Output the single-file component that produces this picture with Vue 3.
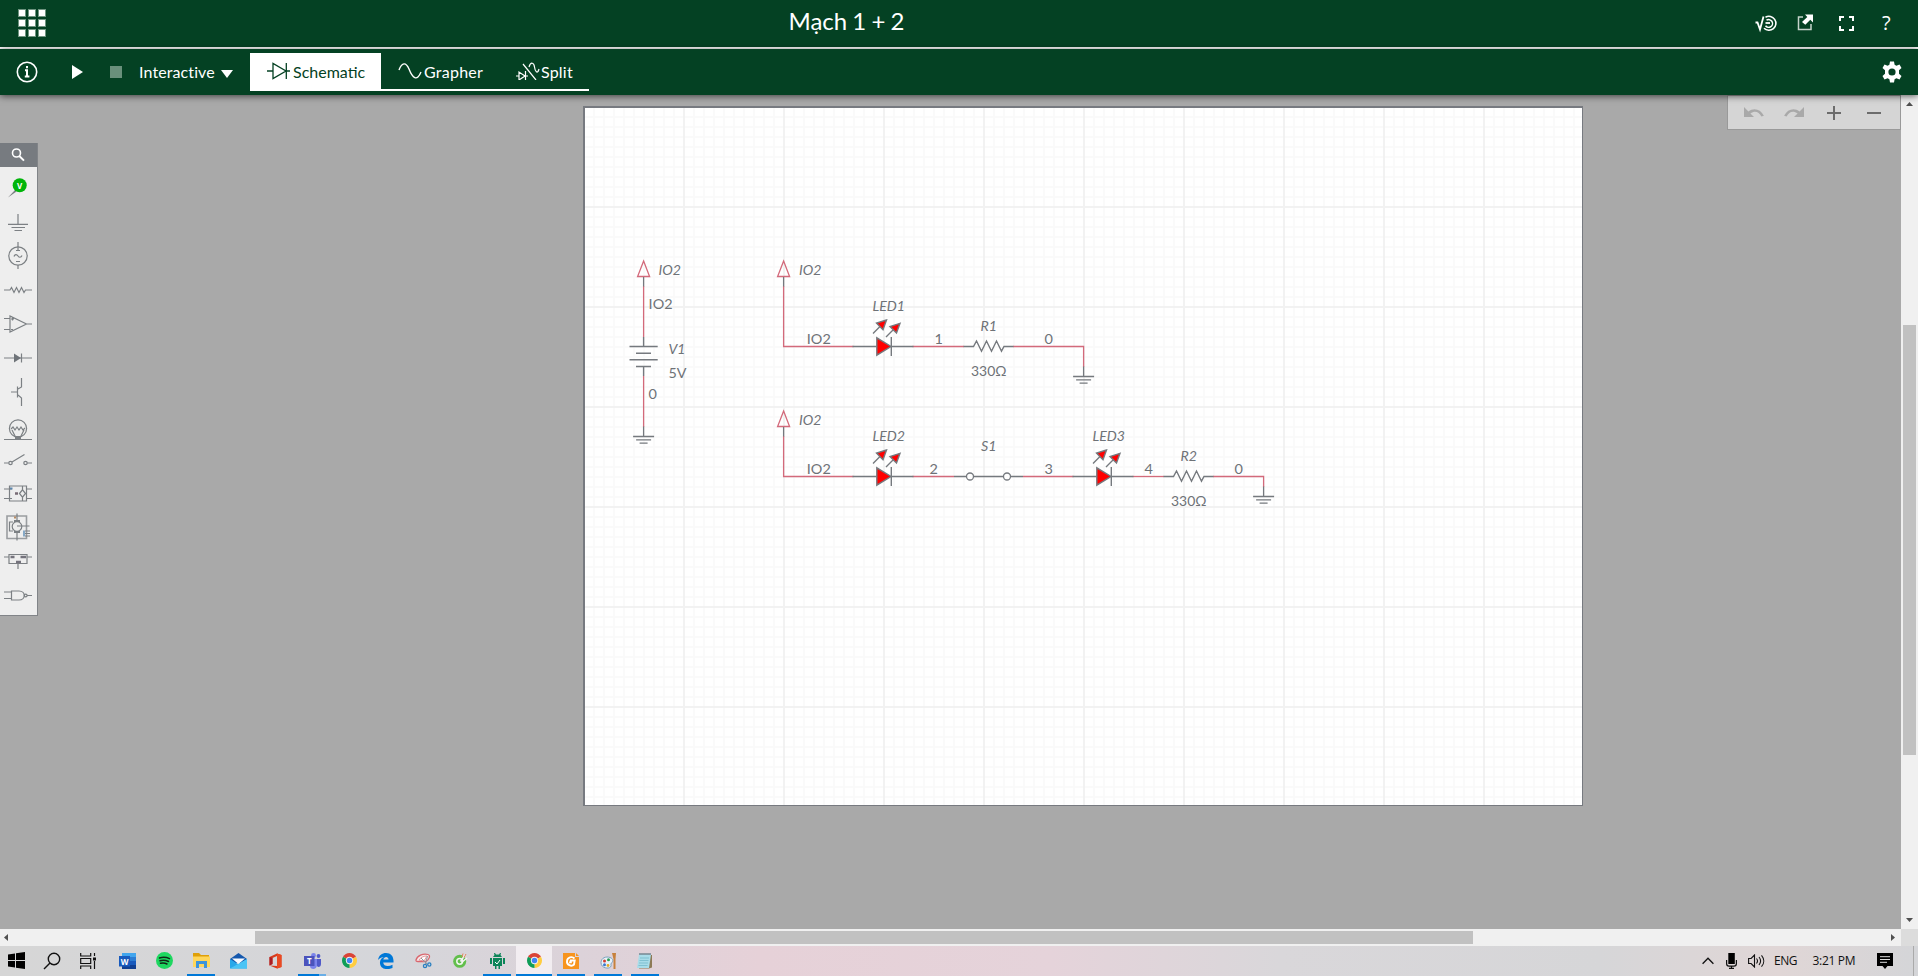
<script setup>
const leds = [
  { name: 'LED1', x: 883.5, y: 346.5 },
  { name: 'LED2', x: 883.5, y: 476.5 },
  { name: 'LED3', x: 1103.5, y: 476.5 },
]
const resistors = [
  { name: 'R1', x: 988.5, y: 346.5 },
  { name: 'R2', x: 1188.5, y: 476.5 },
]
const connectors = [
  { x: 643.6, y: 260.5 },
  { x: 783.6, y: 260.5 },
  { x: 783.6, y: 410.5 },
]
const grounds = [
  { x: 643.6, y: 436.5 },
  { x: 1083.6, y: 376.5 },
  { x: 1263.6, y: 496.5 },
]
const wires = [
  'M643.6 286V337',
  'M643.6 376V427',
  'M783.6 286V346.5H853.5',
  'M912.5 346.5H964',
  'M1013 346.5H1083.6V367',
  'M783.6 436V476.5H853.5',
  'M912.5 476.5H954',
  'M1023 476.5H1073.5',
  'M1132.5 476.5H1164',
  'M1213 476.5H1263.6V487',
]
const labels = [
  { t: 'IO2', x: 658.5, y: 275, w: 22.5, i: true },
  { t: 'IO2', x: 648.6, y: 309, w: 24 },
  { t: 'V1', x: 668.5, y: 354, w: 17, i: true },
  { t: '5V', x: 668.5, y: 378, w: 18 },
  { t: '0', x: 648.5, y: 399, w: 8.4 },
  { t: 'IO2', x: 799, y: 275, w: 22.5, i: true },
  { t: 'IO2', x: 799, y: 425, w: 22.5, i: true },
  { t: 'IO2', x: 806.8, y: 344, w: 24 },
  { t: 'IO2', x: 806.8, y: 474, w: 24 },
  { t: 'LED1', x: 872.5, y: 311, w: 32.5, i: true },
  { t: 'LED2', x: 872.5, y: 441, w: 32.5, i: true },
  { t: 'LED3', x: 1092.5, y: 441, w: 32.5, i: true },
  { t: '1', x: 934.5, y: 344, w: 8.4 },
  { t: '2', x: 929.5, y: 474, w: 8.4 },
  { t: '3', x: 1044.5, y: 474, w: 8.4 },
  { t: '4', x: 1144.5, y: 474, w: 8.4 },
  { t: '0', x: 1044.5, y: 344, w: 8.4 },
  { t: '0', x: 1234.5, y: 474, w: 8.4 },
  { t: 'R1', x: 980.5, y: 331, w: 16.5, i: true },
  { t: 'R2', x: 1180.5, y: 461, w: 16.5, i: true },
  { t: 'S1', x: 981, y: 451, w: 15.5, i: true },
  { t: '330Ω', x: 971, y: 376, w: 35.5 },
  { t: '330Ω', x: 1171, y: 506, w: 35.5 },
]
</script>

<template>
  <div class="screen">
    <header class="titlebar">
      <div class="apps"><i v-for="n in 9" :key="n"></i></div>
      <h1>Mạch 1 + 2</h1>
      <div class="actions">
        <svg class="a-sim" width="24" height="18" viewBox="0 0 24 18" fill="none" stroke="#fff">
          <path d="M.5 7.500h2L5 14.500 8.500 1.500" stroke-width="1.800" />
          <path d="M10.500 2.200A7 7 0 1 1 9 13.300" stroke-width="1.600" />
          <path d="M11.500 5.200A3.900 3.900 0 1 1 10.500 10.800" stroke-width="1.500" />
          <path d="M10.500 8h4.500" stroke-width="1.800" />
        </svg>
        <svg class="a-share" width="17" height="17" viewBox="0 0 17 17">
          <path d="M6 3H1.500v12.500H14V10" fill="none" stroke="#c5d3cb" stroke-width="1.500" />
          <path d="M8 .5h8v8l-2.700-2.700-5 5L5 8l5.300-5z" fill="#fff" />
        </svg>
        <svg class="a-full" width="15" height="15" viewBox="0 0 15 15" fill="none" stroke="#fff" stroke-width="2">
          <path d="M1 5V1h4M10 1h4v4M14 10v4h-4M5 14H1v-4" />
        </svg>
        <span class="a-help">?</span>
      </div>
    </header>

    <nav class="toolbar">
      <svg class="info" width="22" height="22" viewBox="0 0 22 22">
        <circle cx="11" cy="11" r="9.700" fill="none" stroke="#fff" stroke-width="1.600" />
        <path d="M11 5v2.200M9 9.200h2v6.300M8.800 15.500h4.600" fill="none" stroke="#fff" stroke-width="2" />
      </svg>
      <svg class="play" width="11" height="14" viewBox="0 0 11 14"><path d="M0 0L11 7 0 14z" fill="#fff" /></svg>
      <i class="stop"></i>
      <span class="mode">Interactive</span>
      <svg class="caret" width="12" height="8" viewBox="0 0 12 8"><path d="M0 0H12L6 8z" fill="#fff" /></svg>
      <div class="tabs">
        <div class="tab active">
          <svg width="24" height="18" viewBox="0 0 24 18" fill="none" stroke="#044123" stroke-width="1.300">
            <path d="M0 9H6M6 1.500V16.500L19 9zM19 9h4M19.300 1V17" />
          </svg>
          <span class="t1">Schematic</span>
        </div>
        <div class="tab grapher">
          <svg width="24" height="18" viewBox="0 0 24 18" fill="none" stroke="#fff" stroke-width="1.400">
            <path d="M1 8C4 0 8 0 11 7c3.500 9 8 13 12 3" />
          </svg>
          <span class="t2">Grapher</span>
        </div>
        <div class="tab split">
          <svg width="24" height="18" viewBox="0 0 24 18" fill="none" stroke="#fff" stroke-width="1.200">
            <path d="M0 14h3M3 10v8l6-4zM9 14h3M9.500 9v9M7 2l13 16M13 5c2-6 5-4 5.500 0s3 8 4.500 2" />
          </svg>
          <span class="t3">Split</span>
        </div>
      </div>
      <svg class="gear" width="20" height="22" viewBox="0 0 20 22">
        <path fill="#fff" fill-rule="evenodd" d="M8 0.500h4l.6 3.200 1.800 1.100 3.100-1.200 2 3.500-2.500 2.100v3.600l2.500 2.100-2 3.500-3.100-1.200-1.800 1.100-.6 3.200H8l-.6-3.200-1.800-1.100-3.100 1.200-2-3.500L3 12.800V9.200L.5 7.100l2-3.500 3.100 1.200 1.800-1.100zM10 7.400a3.600 3.600 0 1 0 0 7.200 3.600 3.600 0 0 0 0-7.200z" />
      </svg>
    </nav>

    <main class="work">
      <section class="area">
        <aside class="palette">
          <div class="search">
            <svg width="14" height="14" viewBox="0 0 14 14" fill="none" stroke="#fff">
              <circle cx="5.500" cy="5" r="4" stroke-width="1.600" /><path d="M8.300 8L13 12.700" stroke-width="1.900" />
            </svg>
          </div>
          <svg class="parts" width="37" height="448" viewBox="0 167 37 448" fill="none" stroke="#7c8084" stroke-width="1.200">
            <path d="M8 197.500L15 190l1.500 1.500z" fill="#7c8084" stroke="none" />
            <circle cx="19.700" cy="185.300" r="7" fill="#00b50a" stroke="none" />
            <text x="19.700" y="188.600" text-anchor="middle" class="probe">V</text>
            <path d="M18 214v10M8 224.300H28M11.500 227.500H25M14.500 230.500H22" />
            <circle cx="18" cy="256" r="9.200" />
            <path d="M18 242v9M18 265v4M16 250.500h4M16 261.500h4M14 256.500c1-3 3-2 4-.500s3 2 4-.500" />
            <path d="M4 290h6l1.500-2.500 2.500 5 2.500-5 2.500 5 2.500-5 2.500 5 1.500-2.500H32" />
            <path d="M10 316v16l16.500-8zM26 324h6M4 318.500h6M4 329.500h6M11 319h3M12.500 317.500v3M11 329.500h2" />
            <path d="M4 358H32M21.500 353.500v9" /><path d="M14 353.500v9l7-4.500z" fill="#6f7479" stroke="none" />
            <path d="M21.500 378v9L18 389M11 392h6.500M17.500 386.500v11M18 395l3.500 3v8" />
            <circle cx="18" cy="428.500" r="8.600" />
            <path d="M11 429l2-2 2 3 2-3 2 3 2-3 2 3 2-2M12 430l3.500 7M24 430l-3.500 7M4 439.500H32" /><path d="M15 436h6v3h-6z" fill="#7c8084" stroke="none" />
            <circle cx="10.500" cy="463" r="1.700" /><circle cx="25.500" cy="463" r="1.700" /><path d="M4 463h4.700M12 462L24.500 454.500M27.200 463H32" />
            <path d="M9.500 486h17v15h-17zM4 489h8M4 498.500h8M26.500 489H32M26.500 498.500H32M22.500 486.500v3M22.500 497.500v4M19.500 493.500l3-3.700 3 3.700-3 3.700z" />
            <path d="M15 493.500h3" stroke="#786b75" stroke-width="2.500" /><path d="M10 488.500h2.500" stroke="#5c86ad" stroke-width="2" />
            <path d="M7 516h19.500v22.500H7z" stroke="#9a9da0" stroke-width="1.600" /><circle cx="17" cy="526.500" r="4.800" />
            <path d="M17 513.500v8M17 531.500v9M13 522H9.500v9H13M17 526H29.500M25 531h5M25 533.500h5M25 536h5" />
            <path d="M14 521h6M14 532h6" stroke-width="2" /><path d="M14 517.500h2" stroke="#b88b62" stroke-width="2" /><path d="M24 530.500v6" stroke="#6290b8" stroke-width="1.500" />
            <path d="M9 554.500H27v9H9zM4 557h5M27 557h5M18 564v5" />
            <path d="M10.500 557h4M20.500 557h5.500M16 562h5" stroke="#74727c" stroke-width="2.500" />
            <path d="M11.500 591H19c7 0 7 9 0 9h-7.500zM4 592h7.500M4 598.500h7.500M27 595.500H32" /><circle cx="25.700" cy="595.500" r="1.400" />
          </svg>
        </aside>

        <div class="sheet">
          <svg width="997" height="697" viewBox="585 108 997 697" fill="none">
            <defs>
              <pattern id="minor" x="583" y="106" width="10" height="10" patternUnits="userSpaceOnUse">
                <path d="M0 1H10M1 0V10" stroke="#fafafa" stroke-width="2" />
              </pattern>
              <pattern id="major" x="583" y="106" width="100" height="100" patternUnits="userSpaceOnUse">
                <path d="M0 1H100M1 0V100" stroke="#f2f2f2" stroke-width="2" />
              </pattern>
            </defs>
            <rect x="585" y="108" width="997" height="697" fill="url(#minor)" />
            <rect x="585" y="108" width="997" height="697" fill="url(#major)" />

            <path v-for="w in wires" :key="w" :d="w" stroke="#d36a7b" stroke-width="1.300" />

            <g v-for="(c, k) in connectors" :key="'c' + k" :transform="`translate(${c.x} ${c.y})`">
              <path d="M0 .5L6 16H-6z" stroke="#d36a7b" stroke-width="1.300" />
              <path d="M0 16.500V26" stroke="#75797e" stroke-width="1.300" />
            </g>

            <g v-for="(g, k) in grounds" :key="'g' + k" :transform="`translate(${g.x} ${g.y})`" stroke="#75797e" stroke-width="1.300">
              <path d="M0-10V0M-10.500 0H10.500M-7.500 3.300H7.500M-4 6.700H4" />
            </g>

            <path
              d="M643.6 337V346.500M629.500 346.500H657.700M636 353.300H651M629.500 359.700H657.700M636 366.500H651M643.600 366.500V376"
              stroke="#75797e"
              stroke-width="1.400"
            />

            <g v-for="l in leds" :key="l.name" :transform="`translate(${l.x} ${l.y})`" stroke="#75797e" stroke-width="1.400">
              <path d="M-31 0H-7M8 0H30M7.800-9.500V9.500" />
              <path d="M-6.700-8.700V8.700L7.500 0z" fill="#f00" />
              <path d="M-10.500-13L-3-20.500M2.500-9.500L10-17" />
              <path d="M3-26.500L-7-23.500-.5-16.800zM16.500-23.200L6.500-20 13-13.500z" fill="#f00" />
            </g>

            <path
              v-for="r in resistors"
              :key="r.name"
              :transform="`translate(${r.x} ${r.y})`"
              d="M-25 0H-15L-12-5.500-7 4.700-2-5.500 3 4.700 8-5.500 13 4.700 15.500 0H25"
              stroke="#75797e"
              stroke-width="1.400"
            />

            <g stroke="#75797e" stroke-width="1.300">
              <path d="M954 476.500H966.500M973.500 476.500H1003.500M1010.500 476.500H1023" />
              <circle cx="970" cy="476.500" r="3.500" fill="#fff" /><circle cx="1007" cy="476.500" r="3.500" fill="#fff" />
            </g>

            <text
              v-for="(l, k) in labels"
              :key="'l' + k"
              :x="l.x"
              :y="l.y"
              :textLength="l.w"
              lengthAdjust="spacingAndGlyphs"
              :class="['lbl', { it: l.i }]"
            >{{ l.t }}</text>
          </svg>
        </div>

        <div class="zoombar">
          <svg width="173" height="33" viewBox="0 0 173 33" fill="none">
            <path d="M16 11v10h10l-3.600-3.600c4.500-3 8.500-1.800 11 3.100l2.500-.7c-3.400-6.700-10-8.200-15.500-4.400z" fill="#a9a9a9" />
            <path d="M76 11v10H66l3.600-3.600c-4.500-3-8.500-1.800-11 3.100l-2.500-.7c3.400-6.700 10-8.200 15.500-4.400z" fill="#a9a9a9" />
            <path d="M99 17h14M106 10v14M139 17h14" stroke="#6c6c6c" stroke-width="2" />
          </svg>
        </div>
      </section>

      <div class="vscroll">
        <svg width="17" height="17" viewBox="0 0 17 17"><path d="M5 11L8.500 7 12 11z" fill="#505050" /></svg>
        <i class="vthumb"></i>
        <svg width="17" height="17" viewBox="0 0 17 17"><path d="M5 6h7L8.500 10z" fill="#505050" /></svg>
      </div>
    </main>

    <div class="hscroll">
      <svg width="17" height="17" viewBox="0 0 17 17"><path d="M8 5v7L4 8.500z" fill="#505050" /></svg>
      <i class="hthumb"></i>
      <svg class="right" width="17" height="17" viewBox="0 0 17 17"><path d="M7 5v7l4-3.500z" fill="#505050" /></svg>
      <i class="corner"></i>
    </div>

    <footer class="taskbar">
      <div class="apps-row">
        <div class="task start">
          <svg width="17" height="17" viewBox="0 0 17 17"><path d="M0 2.500L7 1.500V8H0zM8 1.300L17 0V8H8zM0 9H7v6.500L0 14.500zM8 9h9v8L8 15.700z" fill="#000" /></svg>
        </div>
        <div class="task find">
          <svg width="18" height="18" viewBox="0 0 18 18" fill="none" stroke="#111" stroke-width="1.400"><circle cx="11" cy="7" r="5.700" /><path d="M7 11L1 17" /></svg>
        </div>
        <div class="task views">
          <svg width="18" height="16" viewBox="0 0 18 16" fill="none" stroke="#111" stroke-width="1.200"><path d="M1.700 0v3h10V0M1.700 5.500h10v5h-10zM1.700 16v-3h10v3M15.500 0v3M15.500 8v8" /><path d="M14 4.500h3v3h-3z" fill="#111" stroke="none" /></svg>
        </div>
        <div class="task">
          <svg width="17" height="16" viewBox="0 0 17 16"><path d="M3 0h14v4H3z" fill="#41a5ee" /><path d="M3 4h14v4H3z" fill="#2b7cd3" /><path d="M3 8h14v4H3z" fill="#185abd" /><path d="M3 12h14v4H3z" fill="#103f91" /><path d="M0 3h11v10.500H0z" fill="#185abd" /><text x="5.500" y="11.500" class="glyph" text-anchor="middle">W</text></svg>
        </div>
        <div class="task">
          <svg width="17" height="17" viewBox="0 0 17 17" fill="none" stroke="#102717" stroke-width="1.500" stroke-linecap="round"><circle cx="8.500" cy="8.500" r="8.500" fill="#1ed760" stroke="none" /><path d="M3.500 6c4-1.300 7-.8 10 .7M4 8.700c3-.9 6-.5 8.500.8M4.500 11.300c2.500-.6 4.500-.4 6.500.7" /></svg>
        </div>
        <div class="task run">
          <svg width="17" height="15" viewBox="0 0 17 15"><path d="M0 0h6l2 2h8v3H0z" fill="#dfa009" /><path d="M0 3.500h17V14H0z" fill="#ffd65a" /><path d="M3 8h11v7h-3v-4H6v4H3z" fill="#3c94dc" /></svg>
        </div>
        <div class="task">
          <svg width="17" height="16" viewBox="0 0 17 16"><path d="M0 6l8.500-6L17 6v4H0z" fill="#1558ad" /><path d="M2 5.500h13L8.500 11z" fill="#f7fbff" /><path d="M0 6l8.500 5.500L17 6v9.500H0z" fill="#28a8ea" /><path d="M0 15.500L17 6v9.500z" fill="#4bc4f5" /></svg>
        </div>
        <div class="task">
          <svg width="13" height="16" viewBox="0 0 13 16"><path d="M.5 4L8 .5 12.500 2v12L8 15.500.5 12.500 8 13V3L3.500 5v6L.5 12.500z" fill="#d83b1d" /><path d="M8 .5L12.500 2v12L8 15.500z" fill="#ea4a22" /><path d="M.5 4l3 1v6l-3 1.500z" fill="#ab1d25" /></svg>
        </div>
        <div class="task run teams">
          <svg width="17" height="16" viewBox="0 0 17 16"><circle cx="9.500" cy="2.500" r="2.400" fill="#7b83eb" /><circle cx="14.500" cy="3" r="1.900" fill="#5059c9" /><path d="M6 6h7v6c0 5-7 5-7 1z" fill="#7b83eb" /><path d="M13 6h4v5c0 3-3 4-4 2z" fill="#5059c9" /><path d="M0 3h10.500v10H0z" fill="#4b53bc" /><text x="5.200" y="11.200" class="glyph" text-anchor="middle">T</text></svg>
        </div>
        <div class="task">
          <svg width="15" height="15" viewBox="0 0 16 16"><path d="M8 8L1.100 4A8 8 0 0 1 14.900 4z" fill="#db4437" /><path d="M8 8l6.900-4A8 8 0 0 1 8 16z" fill="#ffcd40" /><path d="M8 8v8A8 8 0 0 1 1.100 4z" fill="#0f9d58" /><circle cx="8" cy="8" r="3.900" fill="#f1f1f1" /><circle cx="8" cy="8" r="2.900" fill="#4285f4" /></svg>
        </div>
        <div class="task">
          <svg width="16" height="16" viewBox="0 0 16 16"><path d="M0 7C1 2 4 0 8 0c5 0 8 3.500 7.500 9.500H5.200c.3 4 5.300 4.500 9.300 2.200v3.300C9 17.500 1.500 16 2 9c.2-3 2.500-4.500 4-5C3.500 4 1 5.500 0 7zm5.300-.5h5.300C10.500 3 6 3 5.300 6.500z" fill="#0078d7" /></svg>
        </div>
        <div class="task">
          <svg width="17" height="16" viewBox="0 0 17 16" fill="none"><path d="M1 7C2 3 8 0 13 1.500c3 1 1 5-2 7H3C1 8.500 1 8 1 7z" fill="#f6e9ea" stroke="#d9666e" stroke-width="1.300" /><path d="M4 7C6 4 9 3 12 3L9 8z" fill="#fff" stroke="#e39a9e" /><path d="M6 5l6 6M12.500 3l-2 8" stroke="#8f979e" stroke-width="1" /><circle cx="10" cy="13" r="1.600" stroke="#2a7fc0" stroke-width="1.300" /><circle cx="14.300" cy="11.500" r="1.600" stroke="#2a7fc0" stroke-width="1.300" /></svg>
        </div>
        <div class="task">
          <svg width="15" height="15" viewBox="0 0 15 15" fill="none"><circle cx="6.700" cy="8.300" r="6.500" fill="#62bf4c" /><circle cx="6.700" cy="8.300" r="2.900" stroke="#f2f5f0" stroke-width="1.500" /><path d="M7.500 8.500L12 2M8.500 9.500L14 5" stroke="#f4f4f4" stroke-width="1.500" /><path d="M9 4l1-3.500M11 4.500l2-3.500" stroke="#e5855e" stroke-width="1" /></svg>
        </div>
        <div class="task run">
          <svg width="15" height="16" viewBox="0 0 15 16" fill="#0b8458"><path d="M4 0h1l1 1.500h3L10 0h1l-.5 2L12 4H3l1.500-2zM3 5h9v8h-2v3H8.500v-3h-2v3H5v-3H3zM0 5h2v6H0zM13 5h2v6h-2z" /><path d="M5 9l2 2 3-4" fill="none" stroke="#fff" /></svg>
        </div>
        <div class="task run current">
          <svg width="15" height="15" viewBox="0 0 16 16"><path d="M8 8L1.100 4A8 8 0 0 1 14.900 4z" fill="#db4437" /><path d="M8 8l6.900-4A8 8 0 0 1 8 16z" fill="#ffcd40" /><path d="M8 8v8A8 8 0 0 1 1.100 4z" fill="#0f9d58" /><circle cx="8" cy="8" r="3.900" fill="#f1f1f1" /><circle cx="8" cy="8" r="2.900" fill="#4285f4" /></svg>
        </div>
        <div class="task run">
          <svg width="16" height="16" viewBox="0 0 16 16"><path d="M0 0h12v4h4v12H0z" fill="#f7941d" /><path d="M13 0l3 3h-3z" fill="#f7941d" /><path d="M11.500 5.500C9 3 4.500 4 4 8s4.500 6 7 3.500L11.700 7.500H7.700L7.200 9.200h1.600" fill="none" stroke="#fff" stroke-width="1.900" /></svg>
        </div>
        <div class="task run">
          <svg width="17" height="16" viewBox="0 0 17 16"><path d="M1 9.500C1 5 6 3 10 4.500s3 4 1.500 5.500.5 2-1 4S1 15.500 1 9.500z" fill="#e8f1f8" stroke="#7ba2bd" /><circle cx="4.500" cy="8" r="1.500" fill="#d23e35" /><circle cx="8.500" cy="6.700" r="1.500" fill="#2b9d54" /><circle cx="4.500" cy="11.700" r="1.500" fill="#3c78cf" /><circle cx="8" cy="12.500" r="1.400" fill="#e2aa26" /><path d="M12 0h4l-.5 6v10h-2V6z" fill="#c7813c" /></svg>
        </div>
        <div class="task run">
          <svg width="16" height="16" viewBox="0 0 16 16"><path d="M3 2h12v12.500l-3 1H2z" fill="#8d7a55" /><path d="M2 1.500h12L12 15H0z" fill="#a9dce9" /><path d="M3 5h9M2.500 7.500h9M2 10h9M1.500 12.500h9" stroke="#6fb4c7" stroke-width=".7" /><path d="M2.500 1h11" stroke="#41626e" stroke-width="2" stroke-dasharray="1 1" /></svg>
        </div>
      </div>
      <div class="tray">
        <svg class="chev" width="12" height="8" viewBox="0 0 12 8" fill="none" stroke="#111" stroke-width="1.300"><path d="M.6 6.800L6 1.200l5.400 5.600" /></svg>
        <svg class="mic" width="11" height="16" viewBox="0 0 11 16"><path d="M2.300 0h6.500v11H2.300z" /><path d="M.6 7v3.500c0 2 1 2.600 2.400 2.600h5c1.400 0 2.400-.6 2.400-2.600V7M5.500 13v2M3 15.400h5" fill="none" stroke="#111" stroke-width="1.200" /></svg>
        <svg class="vol" width="17" height="14" viewBox="0 0 17 14" fill="none" stroke="#111" stroke-width="1.100"><path d="M.6 4.500h2.500L6.500 1v12L3.100 9.500H.6zM8.500 4.500c1.200 1.500 1.200 3.500 0 5M11 3c2 2.500 2 5.500 0 8M13.500 1.300c3 3.500 3 8 0 11.400" /></svg>
        <span class="eng">ENG</span>
        <span class="time">3:21 PM</span>
        <svg class="note" width="16" height="16" viewBox="0 0 16 16"><path d="M0 0h16v13h-5.500L8 16l-2.500-3H0z" /><path d="M3 3.700h10M3 6.500h10M3 9.300h7" stroke="#ddd" stroke-width="1" /></svg>
        <i class="desk"></i>
      </div>
    </footer>
  </div>
</template>

<style>
body { margin: 0; overflow: hidden; }
</style>

<style scoped>
.screen { width: 1918px; height: 976px; display: flex; flex-direction: column; background: #a9a9a9; font-family: Lato, "Open Sans", sans-serif; overflow: hidden; }
.screen svg { display: block; flex: none; }
.titlebar { height: 47px; flex: none; background: #044123; border-bottom: 2px solid #fff; display: flex; align-items: flex-start; color: #fff; }
.apps { display: grid; grid-template-columns: repeat(3, 8px); gap: 2px; margin: 9px 0 0 18px; }
.apps i { height: 8px; box-sizing: border-box; background: #fff; border: 1px solid #6f9480; }
h1 { margin: 6px 0 0 742.500px; width: 150px; font-size: 24px; line-height: 30px; word-spacing: -1px; font-weight: 400; white-space: nowrap; }
.actions { display: flex; margin-left: auto; height: 47px; }
.a-sim { margin: 15px 0 0; }
.a-share { margin: 14px 0 0 18px; }
.a-full { margin: 16px 0 0 25px; }
.a-help { margin: 9px 26px 0 28px; width: 10px; font: 20px/28px "Open Sans", sans-serif; }
.toolbar { height: 46px; flex: none; background: #044123; display: flex; align-items: flex-start; color: #fff; font-size: 16px; box-shadow: 0 1px 7px rgba(0, 0, 0, .65); position: relative; z-index: 2; }
.info { margin: 12px 0 0 16px; }
.play { margin: 16px 0 0 34px; }
.stop { width: 12px; height: 12px; margin: 17px 0 0 27px; background: #69907b; }
.mode { margin: 13px 0 0 17px; width: 76px; line-height: 20px; letter-spacing: .1px; }
.caret { margin: 21px 0 0 6px; }
.tabs { display: flex; margin: 4px 0 0 17px; height: 38px; width: 339px; box-sizing: border-box; }
.tab { display: flex; align-items: flex-start; box-sizing: border-box; border-bottom: 2px solid #fff; }
.tab svg { margin-top: 9px; }
.tab span { line-height: 20px; margin: 9px 0 0 2px; white-space: nowrap; }
.tab .t2 { letter-spacing: .25px; }
.tab .t3 { margin-left: 1px; letter-spacing: .2px; }
.active { width: 131px; background: #fff; color: #044123; padding-left: 17px; }
.grapher { width: 118px; padding-left: 17px; }
.split { width: 90px; padding-left: 17px; }
.gear { margin: 12px 16px 0 auto; }
.work { height: 834px; flex: none; display: flex; }
.area { flex: 1; display: flex; align-items: flex-start; }
.palette { width: 37px; margin-top: 48px; background: #eee; border-right: 1px solid #818488; border-bottom: 1px solid #818488; }
.search { height: 24px; background: #777b80; display: flex; align-items: center; padding-left: 11px; }
.probe { font: bold 8px "Open Sans", sans-serif; fill: #fff; stroke: none; }
.sheet { margin: 11px 0 0 545px; background: #fff; border: solid #777a80; border-width: 2px 1px 1px 2px; }
.lbl { font-family: Lato, sans-serif; font-size: 14px; fill: #6e7277; }
.it { font-style: italic; }
.zoombar { margin-left: auto; background: #d5d5d5; border: 1px solid #999; }
.zoombar svg { margin-right: -1px; }
.vscroll { width: 17px; background: #f0f0f0; display: flex; flex-direction: column; align-items: center; }
.vthumb { width: 13px; height: 430px; margin: 213px 0 auto; background: #c1c1c1; }
.hscroll { height: 17px; flex: none; background: #f0f0f0; display: flex; align-items: center; }
.hthumb { height: 13px; width: 1218px; margin-left: 238px; background: #c1c1c1; }
.right { margin-left: auto; }
.corner { width: 17px; height: 17px; background: #dcdcdc; }
.taskbar { height: 30px; flex: none; display: flex; background: linear-gradient(90deg, #d6d6d6 0, #d5d6da 400px, #dcd2d9 580px, #e6d1d8 760px, #e5d3da 1050px, #d9d7da 1280px, #d6d6d8 1600px, #e0d6d6 1780px, #d4d5d8 1918px); }
.apps-row { display: flex; }
.task { width: 28px; margin: 0 4.500px; height: 30px; box-sizing: border-box; padding: 0 0 1px; display: flex; align-items: center; justify-content: center; }
.start { margin: 0 4px 0 2px; }
.find { margin: 0 4px; }
.views { margin: 0 6.500px 0 4px; }
.run { border-bottom: 2px solid #0078d7; padding: 2px 0 1px; }
.teams { border-image: linear-gradient(90deg, #0078d7 20px, #6aaee6 20px) 2; border-top: 0; border-left: 0; border-right: 0; }
.current { width: 36px; margin: 0 .5px; background: #f2edf1; }
.glyph { font: bold 8px "Open Sans", sans-serif; fill: #fff; }
.tray { margin-left: auto; display: flex; font: 12px/16px "Open Sans", sans-serif; color: #111; }
.chev { margin: 11px 0 0; }
.mic { margin: 7px 0 0 12px; }
.vol { margin: 8px 0 0 11px; }
.eng { margin: 7px 0 0 9px; width: 24px; letter-spacing: -.5px; }
.time { margin: 7px 0 0 14.500px; width: 43.500px; letter-spacing: -.3px; white-space: nowrap; }
.note { margin: 7px 0 0 21px; }
.desk { width: 1px; height: 30px; background: #aaa; margin: 0 4px 0 20px; }
</style>
